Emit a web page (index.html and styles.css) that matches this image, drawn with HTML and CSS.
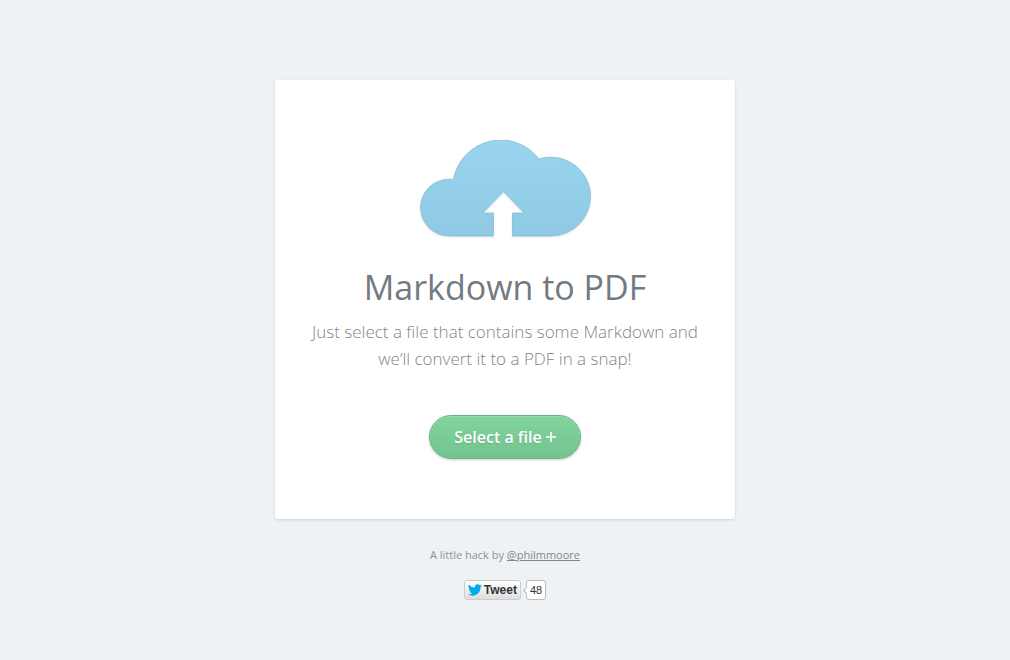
FILE: index.html
```html
<!DOCTYPE html>
<html lang="en">
<head>
    <meta charset="UTF-8">
    <meta name="viewport" content="width=device-width, initial-scale=1.0">
    <title>Markdown to PDF</title>
    <link rel="stylesheet" href="styles.css">
</head>
<body>
    <main class="card">
        <svg class="cloud" width="174" height="98" viewBox="-2 0 174 98" aria-hidden="true">
            <defs>
                <linearGradient id="sky" x1="0" y1="0" x2="0" y2="1">
                    <stop offset="0" stop-color="#99d5ee"/>
                    <stop offset="1" stop-color="#8fc9e4"/>
                </linearGradient>
            </defs>
            <path fill="url(#sky)" stroke="#86bdd5" stroke-opacity=".8" d="M29 96A28.4 28.4 0 0 1 29 39.2Q31 39 33.5 39.4A48 48 0 0 1 119 19.1A39.5 39.5 0 0 1 170.5 56.5A39.5 39.5 0 0 1 131 96H92.5V73H104.2L83.5 51.5L62.8 73H73.5V96Z"/>
        </svg>
        <h1>Markdown to PDF</h1>
        <p class="intro">Just select a file that contains some Markdown and we’ll convert it to a PDF in a snap!</p>
        <button type="button" class="select-file">Select a file
            <svg width="10" height="10" viewBox="0 0 10 10" aria-hidden="true"><path d="M5 0V10M0 5H10" stroke="#fff" stroke-width="1.6"/></svg>
        </button>
    </main>

    <footer class="footer">
        <p>A little hack by <a href="#">@philmmoore</a></p>
        <div class="share">
            <a class="tweet" href="#">
                <svg width="14" height="12" viewBox="0 0 24 20" aria-hidden="true"><path fill="#00aced" d="M24 2.4a10 10 0 0 1-2.8.8A5 5 0 0 0 23.3.5a10 10 0 0 1-3.1 1.2A4.9 4.9 0 0 0 11.8 6.2 14 14 0 0 1 1.7 1 4.9 4.9 0 0 0 3.2 7.6 5 5 0 0 1 1 7a4.9 4.9 0 0 0 3.9 4.9 5 5 0 0 1-2.2.1 4.9 4.9 0 0 0 4.6 3.4A9.9 9.9 0 0 1 0 17.4 14 14 0 0 0 21.5 5 10 10 0 0 0 24 2.4z"/></svg>
                Tweet
            </a>
            <a class="count" href="#">48</a>
        </div>
    </footer>
</body>
</html>
```
FILE: styles.css
```css
body {
    margin: 0;
    padding: 80px 20px 0;
    background: #eef2f5;
    font-family: "Open Sans", sans-serif;
    text-align: center;
}

.card {
    box-sizing: border-box;
    max-width: 460px;
    margin: 0 auto;
    padding: 60px 32px;
    background: #fff;
    border-radius: 3px;
    box-shadow: 0 1px 3px rgba(0, 0, 0, 0.12);
}

.cloud {
    display: block;
    margin: 0 auto;
    filter: drop-shadow(0 1px 1px rgba(0, 0, 0, 0.1));
}

h1 {
    margin: 25px 0 6px;
    color: #727b82;
    font-size: 34px;
    font-weight: 400;
    line-height: 49px;
}

.intro {
    margin: 0;
    color: #80868a;
    font-size: 17px;
    font-weight: 300;
    line-height: 27px;
}

.select-file {
    display: inline-flex;
    align-items: center;
    gap: 4px;
    height: 44px;
    margin-top: 43px;
    padding: 0 24px;
    border: 1px solid #69b585;
    border-radius: 22px;
    background: linear-gradient(#80d59c, #73c38f);
    box-shadow: inset 0 1px 1px rgba(255, 255, 255, 0.25), 0 1px 3px rgba(0, 0, 0, 0.2);
    color: #fff;
    font-family: inherit;
    font-size: 16px;
    font-weight: 600;
    text-shadow: 0 1px 1px rgba(0, 0, 0, 0.15);
    cursor: pointer;
}

.footer {
    padding-top: 28px;
    color: #8794a0;
    font-size: 11px;
    line-height: 16px;
}

.footer p {
    margin: 0 0 17px;
}

.footer p a {
    color: #7c878f;
}

.share {
    display: flex;
    justify-content: center;
    gap: 5px;
}

.tweet,
.count {
    box-sizing: border-box;
    height: 20px;
    border: 1px solid #ccc;
    border-radius: 3px;
    color: #333;
    font-family: "Liberation Sans", Arial, sans-serif;
    font-size: 11px;
    line-height: 18px;
    text-decoration: none;
}

.tweet {
    display: flex;
    align-items: center;
    gap: 2px;
    padding: 0 3px;
    background: linear-gradient(#fff, #dedede);
    font-size: 12px;
    font-weight: bold;
}

.count {
    position: relative;
    padding: 0 3px;
    border-color: #bbb;
    background: #fff;
}

/* Bubble pointer */
.count::before {
    content: "";
    position: absolute;
    top: 7px;
    left: -3px;
    width: 4px;
    height: 4px;
    border: solid #bbb;
    border-width: 0 0 1px 1px;
    background: #fff;
    transform: rotate(45deg);
}
```
